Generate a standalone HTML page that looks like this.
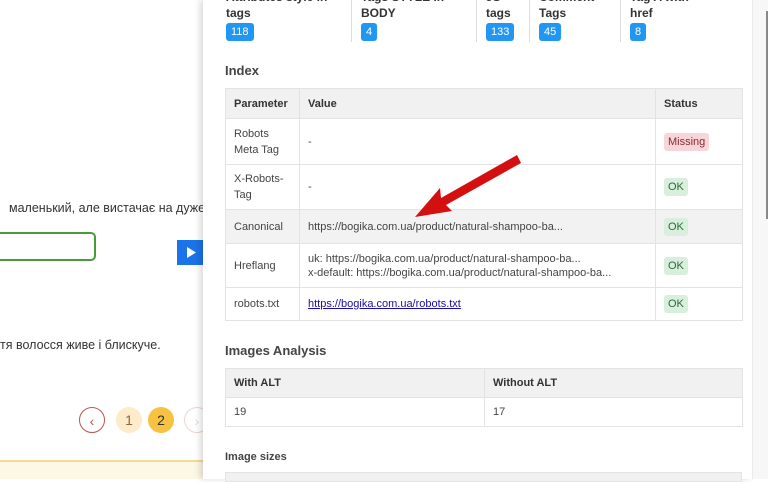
<!DOCTYPE html>
<html><head><meta charset="utf-8"><style>
*{box-sizing:border-box;margin:0;padding:0}
body{width:768px;height:479px;overflow:hidden;position:relative;background:#fff;font-family:"Liberation Sans",sans-serif;}
.abs{position:absolute}
.lp{font-family:"Liberation Sans",sans-serif;font-size:12.5px;color:#333}
.panel{left:203px;top:0;width:549px;height:479px;background:#fff;box-shadow:-3px 0 6px rgba(0,0,0,.15);font-family:"Liberation Sans",sans-serif;color:#333}
.sb{left:752px;top:0;width:16px;height:479px;background:#f7f7f7;border-left:1px solid #eaeaea}
.badge{position:absolute;background:#2196f3;color:#fff;font-size:11px;height:18px;line-height:18px;padding:0 5px;border-radius:3px}
.lbl{position:absolute;font-size:12px;font-weight:bold;color:#333}
.sep{position:absolute;top:0;width:1px;height:42px;background:#ddd}
h3{position:absolute;font-size:13px;font-weight:bold;color:#444}
table{position:absolute;border-collapse:collapse;font-size:11px;color:#444;table-layout:fixed}
td,th{border:1px solid #e3e3e3;padding:0 8px;text-align:left;vertical-align:middle;white-space:nowrap}
th{background:#f1f1f1;font-weight:bold;color:#333}
.ok,.mi{display:inline-block;font-size:11px;padding:3px 4px;border-radius:3px}
.ok{background:#d8efdd;color:#2a6a3a}
.mi{background:#f8d5d8;color:#8a2a35}
.c{position:absolute;width:26px;height:26px;border-radius:50%;text-align:center;line-height:26px;font-size:14px}
</style></head><body>
<div class="abs lp" style="left:9px;top:201px">маленький, але вистачає на дуже д</div>
<div class="abs" style="left:-6px;top:232px;width:102px;height:29px;border:2px solid #4a9a3c;border-radius:5px"></div>
<div class="abs" style="left:177px;top:240px;width:27px;height:25px;background:#1a73e8"><svg width="27" height="25"><polygon points="10,7 19,12.5 10,18" fill="#fff"/></svg></div>
<div class="abs lp" style="left:0;top:338px">тя волосся живе і блискуче.</div>
<div class="c" style="left:79px;top:407px;border:1.5px solid #b5574a;color:#b5574a">‹</div>
<div class="c" style="left:116px;top:407px;background:#fdebc9;color:#8a6a3a">1</div>
<div class="c" style="left:148px;top:407px;background:#f7c142;color:#333">2</div>
<div class="c" style="left:184px;top:407px;border:1.5px solid #ecd6d0;color:#ddd">›</div>
<div class="abs" style="left:0;top:460px;width:210px;height:19px;background:#fdf7e6;border-top:2px solid #f6d892"></div>

<div class="abs panel">
  <div class="lbl" style="left:23px;top:-10px">Attributes style in</div>
  <div class="lbl" style="left:23px;top:6px">tags</div>
  <div class="badge" style="left:23px;top:23px">118</div>
  <div class="sep" style="left:148px"></div>
  <div class="lbl" style="left:158px;top:-10px">Tags STYLE in</div>
  <div class="lbl" style="left:158px;top:6px">BODY</div>
  <div class="badge" style="left:158px;top:23px">4</div>
  <div class="sep" style="left:273px"></div>
  <div class="lbl" style="left:283px;top:-10px">JS</div>
  <div class="lbl" style="left:283px;top:6px">tags</div>
  <div class="badge" style="left:283px;top:23px">133</div>
  <div class="sep" style="left:326px"></div>
  <div class="lbl" style="left:336px;top:-10px">Comment</div>
  <div class="lbl" style="left:336px;top:6px">Tags</div>
  <div class="badge" style="left:336px;top:23px">45</div>
  <div class="sep" style="left:417px"></div>
  <div class="lbl" style="left:427px;top:-10px">Tag A with</div>
  <div class="lbl" style="left:427px;top:6px">href</div>
  <div class="badge" style="left:427px;top:23px">8</div>

  <h3 style="left:22px;top:63px">Index</h3>
  <table style="left:22px;top:88px;width:517px">
    <col style="width:74px"><col style="width:356px"><col style="width:87px">
    <tr style="height:30px"><th>Parameter</th><th>Value</th><th>Status</th></tr>
    <tr style="height:46px"><td style="line-height:16px">Robots<br>Meta Tag</td><td>-</td><td><span class="mi">Missing</span></td></tr>
    <tr style="height:45px"><td style="line-height:16px">X-Robots-<br>Tag</td><td>-</td><td><span class="ok">OK</span></td></tr>
    <tr style="height:34px;background:#f2f2f2"><td>Canonical</td><td>https://bogika.com.ua/product/natural-shampoo-ba...</td><td><span class="ok">OK</span></td></tr>
    <tr style="height:44px"><td>Hreflang</td><td style="line-height:14px">uk: https://bogika.com.ua/product/natural-shampoo-ba...<br>x-default: https://bogika.com.ua/product/natural-shampoo-ba...</td><td><span class="ok">OK</span></td></tr>
    <tr style="height:33px"><td>robots.txt</td><td><a style="color:#1a0dab;text-decoration:underline">https://bogika.com.ua/robots.txt</a></td><td><span class="ok">OK</span></td></tr>
  </table>

  <h3 style="left:22px;top:343px">Images Analysis</h3>
  <table style="left:22px;top:368px;width:517px">
    <col style="width:259px"><col style="width:258px">
    <tr style="height:29px"><th>With ALT</th><th>Without ALT</th></tr>
    <tr style="height:29px"><td>19</td><td>17</td></tr>
  </table>
  <h3 style="left:22px;top:451px;font-size:11px">Image sizes</h3>
  <div class="abs" style="left:22px;top:472px;width:517px;height:10px;background:#f1f1f1;border:1px solid #e3e3e3"></div>
</div>
<div class="abs sb"><div style="position:absolute;left:13px;top:11px;width:2px;height:208px;background:#888"></div></div>
<svg class="abs" style="left:0;top:0" width="768" height="479"><polygon points="415,217 440,188 441,198 517,155 521,163 446,205 452,211" fill="#d40f10"/></svg>
</body></html>
